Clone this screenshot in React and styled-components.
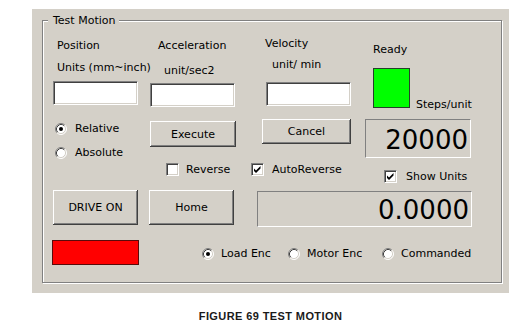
import styled, { createGlobalStyle } from "styled-components"

const Global = createGlobalStyle`
body{
    margin: 0;
    background: #ffffff;
}
`
const Pagina = styled.div`
width: 531px;
height: 336px;
padding-top: 9px;
box-sizing: border-box;
`
const Painel = styled.div`
margin-left: 32px;
width: 477px;
height: 284px;
box-sizing: border-box;
padding: 11px 0 0 10px;
background: #d4d0c8;
color: #000000;
font-family: "DejaVu Sans", Verdana, sans-serif;
font-size: 11px;
line-height: 13px;
`
const Grupo = styled.div`
position: relative;
width: 460px;
height: 263px;
box-sizing: border-box;
border: 1px solid #808080;
box-shadow: 1px 1px 0 #ffffff, inset 1px 1px 0 #ffffff;
padding: 15px 0 0 10px;
`
const Legenda = styled.span`
position: absolute;
top: -7px;
left: 5px;
padding: 0 4px 0 5px;
background: #d4d0c8;
`
const Faixa = styled.div`
display: grid;
grid-template-columns: 97px 112px 103px 108px;
align-items: start;
margin-top: ${p => p.$mt || 0}px;
`
const Coluna = styled.div`
display: flex;
flex-direction: column;
align-items: flex-start;
grid-column: ${p => p.$span || "auto"};
`
const Rotulo = styled.span`
white-space: nowrap;
margin-left: ${p => p.$ml || 0}px;
margin-top: ${p => p.$mt || 0}px;
margin-bottom: ${p => p.$mb || 0}px;
`
const Caixa = styled.input`
width: 85px;
height: 24px;
box-sizing: border-box;
margin: ${p => p.$mt || 0}px 0 0 ${p => p.$ml || 0}px;
padding: 0 3px;
background: #ffffff;
border-style: solid;
border-width: 1px;
border-color: #808080 #ffffff #ffffff #808080;
box-shadow: inset 1px 1px 0 #404040, inset -1px -1px 0 #d4d0c8;
font: inherit;
outline: none;
`
const Botao = styled.button`
width: ${p => p.$w}px;
height: ${p => p.$h}px;
margin: ${p => p.$mt || 0}px 0 0 ${p => p.$ml || 0}px;
padding: 0;
border: none;
background: #d4d0c8;
box-shadow: inset -1px -1px 0 #404040, inset 1px 1px 0 #ffffff, inset -2px -2px 0 #808080;
color: #000000;
font: inherit;
`
const Visor = styled.div`
width: ${p => p.$w}px;
height: ${p => p.$h}px;
box-sizing: border-box;
margin: ${p => p.$mt || 0}px 0 0 ${p => p.$ml || 0}px;
padding-right: 2px;
border-style: solid;
border-width: 1px;
border-color: #808080 #ffffff #ffffff #808080;
font-size: 26px;
line-height: ${p => p.$h + 1}px;
text-align: right;
overflow: hidden;
`
const Led = styled.div`
width: ${p => p.$w}px;
height: ${p => p.$h}px;
box-sizing: border-box;
margin: ${p => p.$mt || 0}px 0 0 ${p => p.$ml || 0}px;
background: ${p => p.$cor};
border: 1px solid ${p => p.$borda};
`
const LinhaPronto = styled.div`
display: flex;
align-items: flex-end;
margin: 12px 0 0 8px;
`
const Opcao = styled.label`
display: flex;
align-items: center;
gap: ${p => p.$gap || 7}px;
width: ${p => (p.$w ? p.$w + "px" : "auto")};
height: 13px;
margin: ${p => p.$mt || 0}px 0 0 ${p => p.$ml || 0}px;
white-space: nowrap;
svg{
    flex: none;
}
`
const Quadrinho = styled.span`
display: flex;
align-items: center;
justify-content: center;
flex: none;
width: 13px;
height: 13px;
box-sizing: border-box;
background: #ffffff;
border-style: solid;
border-width: 1px;
border-color: #808080 #ffffff #ffffff #808080;
box-shadow: inset 1px 1px 0 #404040, inset -1px -1px 0 #d4d0c8;
`
const LinhaRadios = styled.div`
display: flex;
align-items: center;
margin: 7px 0 0 52px;
`
const Figura = styled.div`
margin: 17px 0 0 32px;
width: 477px;
text-align: center;
font-family: "Liberation Sans", Arial, sans-serif;
font-weight: bold;
font-size: 11px;
line-height: 13px;
letter-spacing: 0.4px;
color: #1a1a1a;
`

function Radio({ marcado }) {
    return (
        <svg width="12" height="12" viewBox="0 0 12 12">
            <circle cx="6" cy="6" r="5" fill="#ffffff" />
            <path d="M2.11 9.89A5.5 5.5 0 0 1 9.89 2.11" fill="none" stroke="#808080" />
            <path d="M2.82 9.18A4.5 4.5 0 0 1 9.18 2.82" fill="none" stroke="#404040" />
            <path d="M9.89 2.11A5.5 5.5 0 0 1 2.11 9.89" fill="none" stroke="#ffffff" />
            <path d="M9.18 2.82A4.5 4.5 0 0 1 2.82 9.18" fill="none" stroke="#d4d0c8" />
            {marcado && <circle cx="6" cy="6" r="2" fill="#000000" />}
        </svg>
    )
}

function Marca({ marcado }) {
    return (
        <Quadrinho>
            {marcado && (
                <svg width="9" height="9" viewBox="0 0 9 9">
                    <path d="M1 3.5L3 5.5L7.5 1V3.5L3 8L1 6Z" fill="#000000" />
                </svg>
            )}
        </Quadrinho>
    )
}

function App() {
    return (
        <Pagina>
            <Global />
            <Painel>
                <Grupo>
                    <Legenda>Test Motion</Legenda>
                    <Faixa>
                        <Coluna>
                            <Rotulo $ml={4} $mt={3}>Position</Rotulo>
                            <Rotulo $ml={4} $mt={9}>Units (mm~inch)</Rotulo>
                            <Caixa $mt={7} defaultValue="" />
                        </Coluna>
                        <Coluna>
                            <Rotulo $ml={8} $mt={3}>Acceleration</Rotulo>
                            <Rotulo $ml={14} $mt={12}>unit/sec2</Rotulo>
                            <Caixa $mt={6} defaultValue="" />
                        </Coluna>
                        <Coluna>
                            <Rotulo $ml={3} $mt={1}>Velocity</Rotulo>
                            <Rotulo $ml={10} $mt={8}>unit/ min</Rotulo>
                            <Caixa $ml={4} $mt={11} defaultValue="" />
                        </Coluna>
                        <Coluna>
                            <Rotulo $ml={8} $mt={7}>Ready</Rotulo>
                            <LinhaPronto>
                                <Led $w={37} $h={40} $cor="#00ff00" $borda="#26402a" />
                                <Rotulo $ml={6} $mb={-3}>Steps/unit</Rotulo>
                            </LinhaPronto>
                        </Coluna>
                    </Faixa>

                    <Faixa $mt={11}>
                        <Coluna>
                            <Opcao $ml={2} $mt={3} $gap={8}><Radio marcado />Relative</Opcao>
                            <Opcao $ml={2} $mt={11} $gap={8}><Radio />Absolute</Opcao>
                        </Coluna>
                        <Coluna>
                            <Botao $w={86} $h={26} $mt={2}>Execute</Botao>
                            <Opcao $ml={16} $mt={16}><Marca />Reverse</Opcao>
                        </Coluna>
                        <Coluna>
                            <Botao $w={89} $h={25}>Cancel</Botao>
                            <Opcao $ml={-11} $mt={19} $gap={8}><Marca marcado />AutoReverse</Opcao>
                        </Coluna>
                        <Coluna>
                            <Visor $w={106} $h={39}>20000</Visor>
                            <Opcao $ml={19} $mt={12} $gap={9}><Marca marcado />Show Units</Opcao>
                        </Coluna>
                    </Faixa>

                    <Faixa $mt={7}>
                        <Coluna>
                            <Botao $w={85} $h={35}>DRIVE ON</Botao>
                        </Coluna>
                        <Coluna>
                            <Botao $w={85} $h={35} $ml={-1}>Home</Botao>
                        </Coluna>
                        <Coluna $span="3 / 5">
                            <Visor $w={215} $h={36} $ml={-5} $mt={1}>0.0000</Visor>
                        </Coluna>
                    </Faixa>

                    <Faixa $mt={13}>
                        <Coluna>
                            <Led $w={87} $h={25} $ml={-1} $cor="#ff0000" $borda="#5a0a0a" />
                        </Coluna>
                        <Coluna $span="2 / 5">
                            <LinhaRadios>
                                <Opcao $w={86}><Radio marcado />Load Enc</Opcao>
                                <Opcao $w={94}><Radio />Motor Enc</Opcao>
                                <Opcao><Radio />Commanded</Opcao>
                            </LinhaRadios>
                        </Coluna>
                    </Faixa>
                </Grupo>
            </Painel>
            <Figura>FIGURE 69 TEST MOTION</Figura>
        </Pagina>
    )
}

export default App
